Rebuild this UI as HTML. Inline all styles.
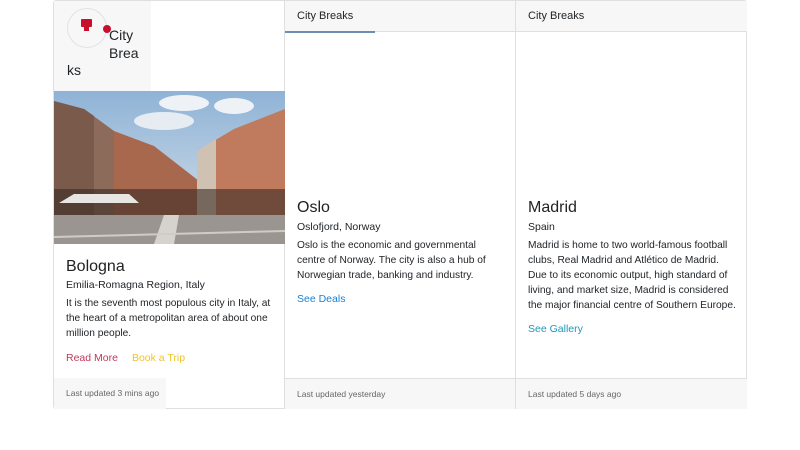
<!DOCTYPE html>
<html><head><style>
*{box-sizing:border-box;margin:0;padding:0}
body{width:800px;height:450px;background:#fff;font-family:"Liberation Sans",sans-serif;color:#212529;position:relative;overflow:hidden}
.grp{position:absolute;left:53px;top:0;width:694px;height:409px;border:1px solid #dfdfdf;border-radius:3px}
.col{position:absolute;top:0;height:408px}
.hdr{position:absolute;left:0;right:0;top:0;height:31px;background:#f7f7f7;border-bottom:1px solid #dfdfdf;font-size:11px;padding:9px 12px}
.ftr{position:absolute;left:0;bottom:0;height:31px;background:#f7f7f7;border-top:1px solid #dfdfdf;font-size:8.5px;color:#666;padding:10px 12px;white-space:nowrap}
.t{position:absolute;left:12px;right:4px}
h5{font-size:16px;font-weight:normal;color:#222}
.sub{font-size:10.5px}
.txt{font-size:10.2px;line-height:15px;white-space:nowrap}
.lk{font-size:10.5px}
</style></head><body>
<div class="grp">
 <div class="col" style="left:0;width:231px;border-right:1px solid #dfdfdf">
  <div style="position:absolute;left:0;top:0;width:97px;height:90px;background:#f7f7f7"></div>
  <div style="position:absolute;left:13px;top:7px;width:40px;height:40px;border-radius:50%;border:1px solid #e2e2e2;background:#f7f7f7"></div>
  <div style="position:absolute;left:27px;top:18px;width:11px;height:8px;background:#c8102e;border-radius:1px"></div>
  <div style="position:absolute;left:30px;top:26px;width:5px;height:4px;background:#c8102e"></div>
  <div style="position:absolute;left:49px;top:24px;width:8px;height:8px;border-radius:50%;background:#c8102e"></div>
  <div style="position:absolute;left:55px;top:25px;font-size:14px;line-height:18px;width:34px">City Brea</div>
  <div style="position:absolute;left:13px;top:61px;font-size:14px">ks</div>
  <svg style="position:absolute;left:0;top:90px" width="231" height="153" viewBox="0 0 231 153">
   <defs><linearGradient id="s" x1="0" y1="0" x2="0" y2="1"><stop offset="0" stop-color="#8fb3d6"/><stop offset="1" stop-color="#d9e2ea"/></linearGradient></defs>
   <rect width="231" height="153" fill="url(#s)"/>
   <ellipse cx="130" cy="12" rx="25" ry="8" fill="#eef2f6"/><ellipse cx="180" cy="15" rx="20" ry="8" fill="#eef2f6"/><ellipse cx="110" cy="30" rx="30" ry="9" fill="#e6ecf2"/>
   <polygon points="0,10 30,18 60,40 75,55 100,65 145,90 145,130 0,130" fill="#8c6b5a"/>
   <polygon points="0,10 30,18 40,25 40,130 0,130" fill="#7a5a4a"/>
   <polygon points="60,40 100,55 145,90 145,130 60,130" fill="#a8684e"/>
   <polygon points="143,60 180,38 231,18 231,130 143,130" fill="#c07a5e"/>
   <polygon points="143,60 162,48 162,130 143,130" fill="#cfc2b2"/>
   <rect x="0" y="98" width="231" height="30" fill="#3a2b25" opacity=".6"/>
   <polygon points="5,112 20,103 75,103 85,112" fill="#e8e6e2"/>
   <rect x="0" y="124" width="231" height="29" fill="#9a9590"/>
   <polygon points="110,124 125,124 120,153 100,153" fill="#d6d3cf"/>
   <line x1="0" y1="146" x2="231" y2="140" stroke="#cfccc8" stroke-width="2"/>
  </svg>
  <div class="t" style="top:257px"><h5>Bologna</h5></div>
  <div class="t sub" style="top:278px">Emilia-Romagna Region, Italy</div>
  <div class="t txt" style="top:295px">It is the seventh most populous city in Italy, at<br>the heart of a metropolitan area of about one<br>million people.</div>
  <div class="t lk" style="top:351px"><span style="color:#c0395a">Read More</span><span style="color:#f0c330;margin-left:14px">Book a Trip</span></div>
  <div class="ftr" style="width:112px;border-top:none">Last updated 3 mins ago</div>
 </div>
 <div class="col" style="left:231px;width:231px;border-right:1px solid #dfdfdf">
  <div class="hdr">City Breaks</div>
  <div style="position:absolute;left:0;top:30px;width:90px;height:2px;background:#6c8fb0"></div>
  <div class="t" style="top:198px"><h5>Oslo</h5></div>
  <div class="t sub" style="top:220px">Oslofjord, Norway</div>
  <div class="t txt" style="top:237px">Oslo is the economic and governmental<br>centre of Norway. The city is also a hub of<br>Norwegian trade, banking and industry.</div>
  <div class="t lk" style="top:292px;color:#1a7fd0">See Deals</div>
  <div class="ftr" style="right:0">Last updated yesterday</div>
 </div>
 <div class="col" style="left:462px;width:231px">
  <div class="hdr">City Breaks</div>
  <div class="t" style="top:198px"><h5>Madrid</h5></div>
  <div class="t sub" style="top:220px">Spain</div>
  <div class="t txt" style="top:237px">Madrid is home to two world-famous football<br>clubs, Real Madrid and Atlético de Madrid.<br>Due to its economic output, high standard of<br>living, and market size, Madrid is considered<br>the major financial centre of Southern Europe.</div>
  <div class="t lk" style="top:322px;color:#1a9ab8">See Gallery</div>
  <div class="ftr" style="right:0">Last updated 5 days ago</div>
 </div>
</div>
</body></html>
